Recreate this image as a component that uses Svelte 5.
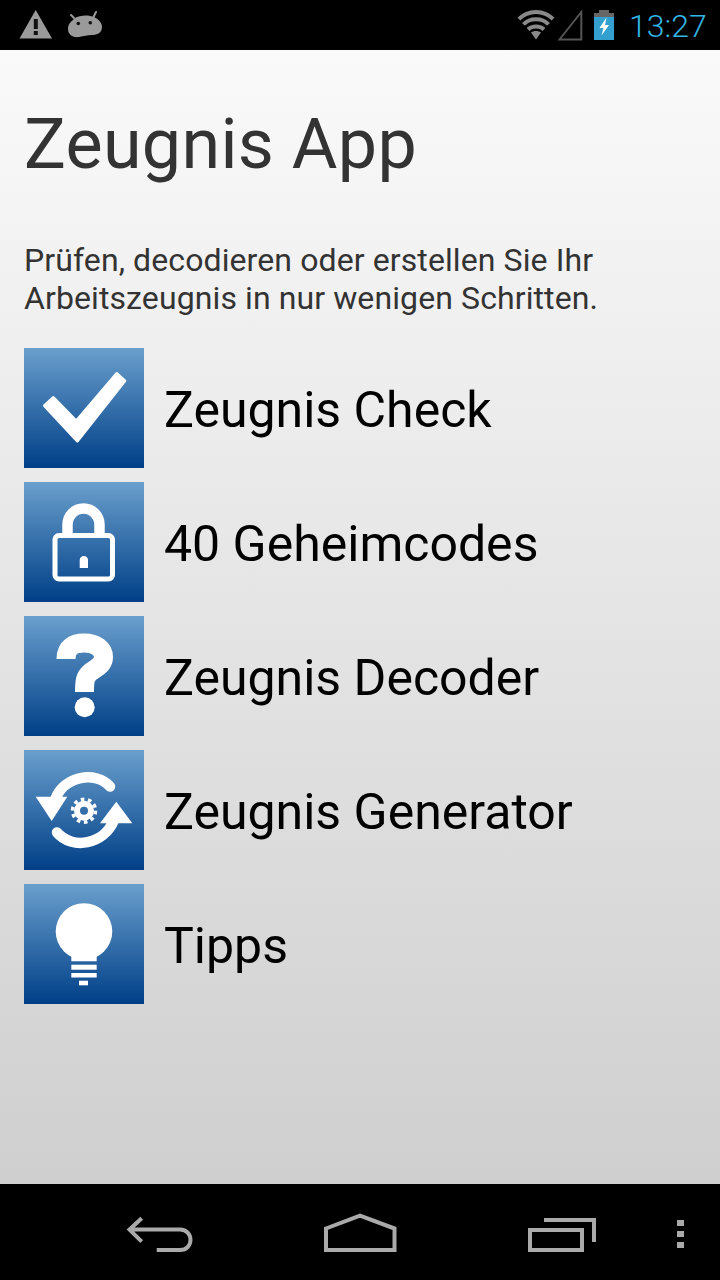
<script>
  const items = [
    { label: 'Zeugnis Check', icon: 'check' },
    { label: '40 Geheimcodes', icon: 'lock' },
    { label: 'Zeugnis Decoder', icon: 'question' },
    { label: 'Zeugnis Generator', icon: 'sync' },
    { label: 'Tipps', icon: 'bulb' }
  ];
</script>

<div class="screen">
  <header class="status">
    <div class="group left">
      <svg class="warn" width="34" height="50" viewBox="19 0 34 50">
        <path d="M35.700 10 L52 38.500 H19.500 Z" fill="#9a9a9a" />
        <rect x="33.800" y="19" width="4" height="10" fill="#111" />
        <rect x="33.800" y="31" width="4" height="4" fill="#111" />
      </svg>
      <svg class="droid" width="36" height="50" viewBox="66 0 36 50">
        <path d="M70 15 L73 18 M95 12 L92.500 17" stroke="#9a9a9a" stroke-width="2" stroke-linecap="round" />
        <path d="M67 29 C67 23 71 21 74 18 C78 15 88 14.500 93 17 C98 19.500 101 23 101 27 C101 33 96 35 91 35 C86 35 83 36 78 37 C71 38 67 34 67 29 Z" fill="#9a9a9a" />
        <circle cx="77.300" cy="23.500" r="1.800" fill="#111" />
        <circle cx="89.300" cy="22.800" r="1.800" fill="#111" />
      </svg>
    </div>
    <div class="group right">
      <svg width="38" height="50" viewBox="517 0 38 50">
        <g fill="none" stroke="#8a8a8a" stroke-width="4">
          <path d="M519 19 C528 9.500 544 9.500 553 19" />
          <path d="M523.500 24.300 C530 17.500 542 17.500 548.500 24.300" />
          <path d="M528 29.500 C532 25.500 540 25.500 544 29.500" />
        </g>
        <path d="M531 32.500 C534 30.500 538 30.500 541 32.500 L536 39.500 Z" fill="#8a8a8a" />
      </svg>
      <svg class="signal" width="26" height="50" viewBox="557 0 26 50">
        <path d="M559.500 39.500 L581.300 12 V39.500 Z" fill="none" stroke="#555" stroke-width="2" />
      </svg>
      <svg class="battery" width="20" height="50" viewBox="594 0 20 50">
        <rect x="599" y="10" width="10" height="4" fill="#666" />
        <rect x="594" y="13" width="20" height="4" fill="#666" />
        <rect x="594" y="17" width="20" height="23" fill="#33a0cf" />
        <path d="M606.500 17.500 L599.500 28 H603.500 L601.500 35.500 L609 25 H605 Z" fill="#fff" />
      </svg>
      <span class="clock">13:27</span>
    </div>
  </header>

  <main class="content">
    <h1>Zeugnis App</h1>
    <p>Prüfen, decodieren oder erstellen Sie Ihr<br />Arbeitszeugnis in nur wenigen Schritten.</p>
    <ul>
      {#each items as item}
        <li>
          <svg class="tile" width="120" height="120" viewBox="0 0 120 120">
            {#if item.icon === 'check'}
              <path d="M20.500 57.700 L29.300 49.500 L52.300 73 L92.800 25.500 L100.800 32.800 L53.300 93 Z" fill="#fff" stroke="#fff" stroke-width="3" stroke-linejoin="round" />
            {:else if item.icon === 'lock'}
              <path d="M43.500 53 V42.500 A16 16 0 0 1 75.500 42.500 V53" fill="none" stroke="#fff" stroke-width="10.500" />
              <rect x="31" y="53.500" width="57.500" height="43.500" rx="4" fill="none" stroke="#fff" stroke-width="5" />
              <path d="M55.700 86 V78 C55.700 72.500 64 72.500 64 78 V86 Z" fill="#fff" />
            {:else if item.icon === 'question'}
              <path d="M42 43 C42 31 50 27 60 27 C72 27 79.500 33 79.500 41 C79.500 50 71 52 66 56.500 C61.500 60.500 60.500 64 60.500 76" fill="none" stroke="#fff" stroke-width="19" />
              <circle cx="60.700" cy="91.300" r="10" fill="#fff" />
            {:else if item.icon === 'sync'}
              <path d="M86 36.500 C72 21 40 25 31 50" fill="none" stroke="#fff" stroke-width="10.500" stroke-linecap="round" />
              <path d="M11.700 46.700 H43.300 L27.700 71 Z" fill="#fff" />
              <path d="M33 82.500 C48 100 80 95 90 70" fill="none" stroke="#fff" stroke-width="10.500" stroke-linecap="round" />
              <path d="M108.300 73.300 H76 L92.300 51.700 Z" fill="#fff" />
              <circle cx="60" cy="60.700" r="7" fill="none" stroke="#fff" stroke-width="6" />
              <circle cx="60" cy="60.700" r="11.500" fill="none" stroke="#fff" stroke-width="3.500" stroke-dasharray="3.600 3.630" />
            {:else}
              <circle cx="60" cy="47.500" r="28.300" fill="#fff" />
              <path d="M47.300 70 H72.700 V77.300 H47.300 Z" fill="#fff" />
              <rect x="47.300" y="80.700" width="25.400" height="5" fill="#fff" />
              <rect x="47.300" y="89" width="25.400" height="4.500" fill="#fff" />
              <rect x="55" y="96.700" width="9" height="4.600" fill="#fff" />
            {/if}
          </svg>
          <span class="label">{item.label}</span>
        </li>
      {/each}
    </ul>
  </main>

  <nav class="navbar">
    <svg width="68" height="96" viewBox="126 1184 68 96">
      <path d="M141.700 1218.300 L129.500 1229.600 L141.700 1241.700 M129.500 1229.600 H180 C194 1229.600 194 1250 180 1250 H156.700" fill="none" stroke="#aaa" stroke-width="4" />
    </svg>
    <svg class="home" width="74" height="96" viewBox="323 1184 74 96">
      <path d="M326 1228.500 L360 1215.700 L394.500 1228.500 V1250 H326 Z" fill="none" stroke="#aaa" stroke-width="4" />
    </svg>
    <svg class="recent" width="70" height="96" viewBox="527 1184 70 96">
      <rect x="530" y="1230" width="52" height="20" fill="none" stroke="#aaa" stroke-width="4" />
      <path d="M544 1220 H594 V1242" fill="none" stroke="#aaa" stroke-width="4" />
    </svg>
    <div class="dots"><i></i><i></i><i></i></div>
  </nav>
</div>

<style>
  :global(body) { margin: 0; background: #000; }
  .screen {
    width: 720px;
    height: 1280px;
    display: flex;
    flex-direction: column;
    font-family: Roboto, "Liberation Sans", sans-serif;
    overflow: hidden;
  }
  .status {
    height: 50px;
    flex: none;
    background: #000;
    display: flex;
    justify-content: space-between;
    padding-left: 19px;
    box-sizing: border-box;
  }
  .group { display: flex; }
  .droid { margin-left: 14px; }
  .signal { margin-left: 2px; }
  .battery { margin-left: 11px; }
  .clock {
    width: 106px;
    padding-left: 15px;
    box-sizing: border-box;
    font-size: 32px;
    line-height: 52px;
    font-weight: 300;
    color: #33b5e5;
    white-space: nowrap;
  }
  .content {
    flex: 1;
    background: linear-gradient(#fafafa, #cfcfcf);
    padding: 0 24px;
  }
  h1 {
    margin: 49px 0 0;
    font-size: 70px;
    line-height: 90px;
    font-weight: 400;
    letter-spacing: 0.3px;
    color: #333;
  }
  p {
    margin: 52px 0 0;
    font-size: 32px;
    line-height: 38px;
    font-weight: 400;
    letter-spacing: 0.1px;
    color: #333;
  }
  ul {
    list-style: none;
    margin: 31px 0 0;
    padding: 0;
    display: flex;
    flex-direction: column;
    gap: 14px;
  }
  li {
    display: flex;
    align-items: center;
    gap: 20px;
    font-size: 50px;
    font-weight: 400;
    color: #000;
  }
  .label { padding-top: 3px; }
  .tile {
    flex: none;
    background: linear-gradient(#6a9fcd, #003f87);
  }
  .navbar {
    height: 96px;
    flex: none;
    background: #000;
    display: flex;
    padding-left: 126px;
    box-sizing: border-box;
  }
  .home { margin-left: 129px; }
  .recent { margin-left: 130px; }
  .dots {
    margin: 36px 0 0 80px;
    display: flex;
    flex-direction: column;
    gap: 5px;
  }
  .dots i {
    display: block;
    width: 7px;
    height: 6px;
    background: #aaa;
  }
</style>
